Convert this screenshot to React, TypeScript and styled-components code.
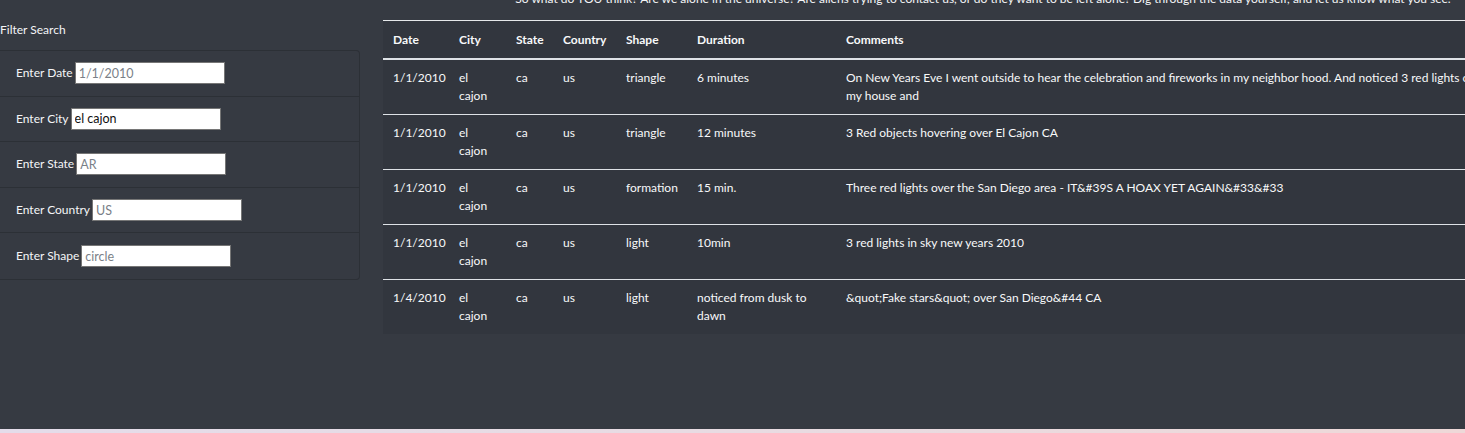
import React from "react";
import styled, { createGlobalStyle } from "styled-components";

const GlobalStyle = createGlobalStyle`
  html, body {
    margin: 0;
    padding: 0;
    overflow: hidden;
    background: linear-gradient(90deg, #e4dcea 0%, #e8dbe2 50%, #eed8d8 100%);
    font-family: "Lato", "Liberation Sans", sans-serif;
  }
  * { box-sizing: border-box; }
`;

const Page = styled.div`
  display: flex;
  align-items: flex-start;
  height: 429px;
  width: 1465px;
  overflow: hidden;
  background: #363a42;
  color: #f4f5f7;
  font-size: 12px;
  line-height: 18px;
`;

const Sidebar = styled.aside`
  flex: none;
  width: 383px;
  padding: 21px 23px 0 0;
`;

const SideTitle = styled.div`
  margin: 0 0 11px;
  color: #f4f5f7;
`;

const FilterList = styled.ul`
  list-style: none;
  margin: 0;
  padding: 0;
  border: 1px solid #2c3036;
  border-left: none;
  border-radius: 0 4px 4px 0;
`;

const FilterItem = styled.li`
  display: flex;
  align-items: center;
  height: 45.6px;
  padding: 0 16px;
  border-bottom: 1px solid #2c3036;
  &:last-child { border-bottom: none; }
`;

const Label = styled.label`
  margin-right: 2px;
  color: #f4f5f7;
`;

const Input = styled.input`
  width: 150px;
  height: 22px;
  padding: 1px 3px;
  border: 1px solid #767676;
  background: #fff;
  color: #111;
  font-family: "Lato", "Liberation Sans", sans-serif;
  font-size: 12.5px;
  outline: none;
  &::placeholder { color: #7a7f88; }
`;

const Main = styled.main`
  flex: none;
  width: 1200px;
`;

const Intro = styled.p`
  margin: -10px 0 12px;
  text-align: center;
  white-space: nowrap;
`;

const Table = styled.table`
  width: 1123px;
  table-layout: fixed;
  border-collapse: collapse;
  background: #32363e;
  color: #f8f9fa;
`;

const Th = styled.th`
  text-align: left;
  font-weight: 700;
  padding: 10px 10px 9px;
  border-top: 1px solid #e6e8ea;
  border-bottom: 2px solid #dee2e6;
  vertical-align: top;
`;

const Td = styled.td`
  padding: 9px 10px;
  border-top: 1px solid #dee2e6;
  vertical-align: top;
`;

type Sighting = {
  date: string;
  city: string;
  state: string;
  country: string;
  shape: string;
  duration: string;
  comments: string;
};

const data: Sighting[] = [
  {
    date: "1/1/2010",
    city: "el cajon",
    state: "ca",
    country: "us",
    shape: "triangle",
    duration: "6 minutes",
    comments:
      "On New Years Eve I went outside to hear the celebration and fireworks in my neighbor hood. And noticed 3 red lights over my house and",
  },
  {
    date: "1/1/2010",
    city: "el cajon",
    state: "ca",
    country: "us",
    shape: "triangle",
    duration: "12 minutes",
    comments: "3 Red objects hovering over El Cajon CA",
  },
  {
    date: "1/1/2010",
    city: "el cajon",
    state: "ca",
    country: "us",
    shape: "formation",
    duration: "15 min.",
    comments: "Three red lights over the San Diego area - IT&#39S A HOAX YET AGAIN&#33&#33",
  },
  {
    date: "1/1/2010",
    city: "el cajon",
    state: "ca",
    country: "us",
    shape: "light",
    duration: "10min",
    comments: "3 red lights in sky new years 2010",
  },
  {
    date: "1/4/2010",
    city: "el cajon",
    state: "ca",
    country: "us",
    shape: "light",
    duration: "noticed from dusk to dawn",
    comments: "&quot;Fake stars&quot; over San Diego&#44 CA",
  },
];

const filters = [
  { label: "Enter Date", id: "datetime", placeholder: "1/1/2010" },
  { label: "Enter City", id: "city", value: "el cajon" },
  { label: "Enter State", id: "state", placeholder: "AR" },
  { label: "Enter Country", id: "country", placeholder: "US" },
  { label: "Enter Shape", id: "shape", placeholder: "circle" },
];

const columns = [
  { title: "Date", width: 66 },
  { title: "City", width: 57 },
  { title: "State", width: 47 },
  { title: "Country", width: 63 },
  { title: "Shape", width: 71 },
  { title: "Duration", width: 149 },
  { title: "Comments", width: 670 },
];

export default function App() {
  return (
    <>
      <GlobalStyle />
      <Page>
        <Sidebar>
          <SideTitle>Filter Search</SideTitle>
          <FilterList>
            {filters.map((f) => (
              <FilterItem key={f.id}>
                <Label htmlFor={f.id}>{f.label}</Label>
                <Input
                  id={f.id}
                  type="text"
                  placeholder={f.placeholder}
                  defaultValue={f.value}
                />
              </FilterItem>
            ))}
          </FilterList>
        </Sidebar>
        <Main>
          <Intro>
            So what do YOU think? Are we alone in the universe? Are aliens trying to contact us, or do they want to be left alone? Dig through the data yourself, and let us know what you see.
          </Intro>
          <Table>
            <colgroup>
              {columns.map((c) => (
                <col key={c.title} style={{ width: c.width }} />
              ))}
            </colgroup>
            <thead>
              <tr>
                {columns.map((c) => (
                  <Th key={c.title}>{c.title}</Th>
                ))}
              </tr>
            </thead>
            <tbody>
              {data.map((r, i) => (
                <tr key={i}>
                  <Td>{r.date}</Td>
                  <Td>{r.city}</Td>
                  <Td>{r.state}</Td>
                  <Td>{r.country}</Td>
                  <Td>{r.shape}</Td>
                  <Td>{r.duration}</Td>
                  <Td>{r.comments}</Td>
                </tr>
              ))}
            </tbody>
          </Table>
        </Main>
      </Page>
    </>
  );
}
